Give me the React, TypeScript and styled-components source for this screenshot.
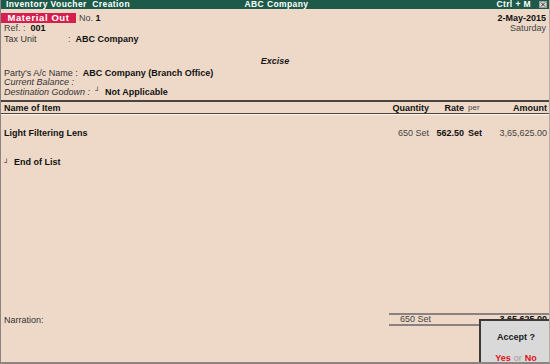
import * as React from 'react';
import styled, { createGlobalStyle } from 'styled-components';

const GlobalStyle = createGlobalStyle`
  html, body {
    margin: 0;
    padding: 0;
    background: #eed9c8;
  }
  body {
    font-family: "Liberation Sans", Arial, sans-serif;
    font-size: 9px;
    color: #1a1a1a;
  }
`;

const Screen = styled.div`
  position: relative;
  width: 550px;
  height: 364px;
  box-sizing: border-box;
  background: #eed9c8;
  display: flex;
  flex-direction: column;
  overflow: hidden;
  border-left: 1px solid #8c8480;
  border-right: 1px solid #b8aaa0;
  border-bottom: 2px solid #8c8480;
`;

const TitleBar = styled.div`
  height: 9px;
  background: #1d5a4a;
  color: #ffffff;
  font-weight: bold;
  font-size: 8.5px;
  letter-spacing: 0.4px;
  display: grid;
  grid-template-columns: 1fr auto 1fr;
  align-items: center;
  padding: 0 2px 0 5px;
  line-height: 9px;
`;

const TitleRight = styled.div`
  display: flex;
  justify-content: flex-end;
  align-items: center;
  gap: 8px;
`;

const CloseBox = styled.span`
  width: 8px;
  height: 7px;
  background: #d8d8d8;
  border: 1px solid #9a9a9a;
  box-sizing: border-box;
  display: flex;
  align-items: center;
  justify-content: center;
`;

const Head = styled.div`
  display: flex;
  justify-content: space-between;
  padding: 4px 3px 0 0;
`;

const Col = styled.div<{ $align?: string }>`
  display: flex;
  flex-direction: column;
  align-items: ${p => p.$align || 'flex-start'};
`;

const Line = styled.div<{ $h?: number; $italic?: boolean }>`
  height: ${p => p.$h || 10}px;
  line-height: ${p => p.$h || 10}px;
  display: flex;
  align-items: center;
  white-space: nowrap;
  font-style: ${p => (p.$italic ? 'italic' : 'normal')};
  padding-left: 3px;
`;

const TypeBadge = styled.span`
  width: 75px;
  height: 10px;
  margin-left: -3px;
  background: #d4204e;
  color: #fff;
  font-weight: bold;
  font-size: 9.5px;
  letter-spacing: 0.6px;
  display: inline-flex;
  justify-content: center;
  align-items: center;
  margin-right: 3px;
`;

const Label = styled.span<{ $w?: number }>`
  display: inline-block;
  width: ${p => (p.$w ? `${p.$w}px` : 'auto')};
  color: #333;
`;

const Bold = styled.span`
  font-weight: bold;
  font-style: normal;
  color: #111;
`;

const Muted = styled.span`
  color: #444;
`;

const SectionTitle = styled.div`
  text-align: center;
  font-weight: bold;
  font-style: italic;
  height: 10px;
  line-height: 10px;
  margin-top: 11px;
  margin-bottom: 2px;
`;

const Party = styled.div`
  display: flex;
  flex-direction: column;
`;

const Mark = styled.span<{ $gap?: number }>`
  font-size: 7px;
  font-weight: bold;
  font-style: normal;
  margin: -3px 5px 0 ${p => p.$gap ?? 2}px;
`;

const TableHead = styled.div`
  margin-top: 3px;
  border-top: 2px solid #4a4542;
  border-bottom: 1px solid #4a4542;
  height: 11px;
  display: grid;
  grid-template-columns: 1fr 60px 35px 20px 63px;
  align-items: center;
  padding-right: 2px;
  position: relative;
  &::after {
    content: '';
    position: absolute;
    left: 0;
    right: 0;
    bottom: -2px;
    border-bottom: 1px solid #fff5ec;
  }
`;

const Cell = styled.span<{ $right?: boolean; $bold?: boolean; $pad?: number; $small?: boolean; $muted?: boolean }>`
  text-align: ${p => (p.$right ? 'right' : 'left')};
  font-weight: ${p => (p.$bold ? 'bold' : 'normal')};
  padding-left: ${p => p.$pad || 0}px;
  font-size: ${p => (p.$small ? '8px' : '9px')};
  color: ${p => (p.$muted ? '#444' : '#111')};
  white-space: nowrap;
`;

const ItemRow = styled.div<{ $top: number }>`
  margin-top: ${p => p.$top}px;
  height: 10px;
  line-height: 10px;
  display: grid;
  grid-template-columns: 1fr 60px 35px 20px 63px;
  align-items: center;
  padding-right: 2px;
  padding-left: 3px;
`;

const Spacer = styled.div`
  flex: 1;
`;

const Footer = styled.div`
  display: flex;
  align-items: center;
  height: 13px;
  margin-bottom: 36px;
`;

const Narration = styled.span`
  padding-left: 3px;
  color: #333;
  flex: 1;
`;

const Totals = styled.div`
  width: 158px;
  height: 9px;
  border-top: 2px solid #8a8280;
  border-bottom: 2px solid #8a8280;
  display: grid;
  grid-template-columns: 42px 1fr;
  align-items: center;
  line-height: 9px;
  padding-right: 2px;
`;

const Dialog = styled.div`
  position: absolute;
  left: 478px;
  top: 319px;
  width: 72px;
  height: 46px;
  box-sizing: border-box;
  background: #d9d9d9;
  border: 2px solid #3a3a3a;
  border-right: none;
  border-bottom: none;
  display: flex;
  flex-direction: column;
  align-items: center;
`;

const Question = styled.div`
  margin-top: 11px;
  font-weight: bold;
`;

const Choices = styled.div`
  margin-top: 11px;
  font-weight: bold;
  color: #e0101a;
  display: flex;
  gap: 3px;
`;

const Or = styled.span`
  color: #a0a0a0;
  font-weight: normal;
`;

export default function App() {
  return (
    <>
      <GlobalStyle />
      <Screen>
        <TitleBar>
          <span>Inventory Voucher&nbsp; Creation</span>
          <span>ABC Company</span>
          <TitleRight>
            <span>Ctrl + M</span>
            <CloseBox>
              <svg width="6" height="5" viewBox="0 0 6 5">
                <path d="M1 0.5 L5 4.5 M5 0.5 L1 4.5" stroke="#333" strokeWidth="1" />
              </svg>
            </CloseBox>
          </TitleRight>
        </TitleBar>

        <Head>
          <Col>
            <Line $h={10}>
              <TypeBadge>Material Out</TypeBadge>
              <Muted>No.&nbsp;</Muted>
              <Bold>1</Bold>
            </Line>
            <Line $h={10}>
              <Muted>Ref. :&nbsp;&nbsp;</Muted>
              <Bold>001</Bold>
            </Line>
            <Line $h={12}>
              <Label $w={64}>Tax Unit</Label>
              <Muted>:&nbsp;&nbsp;</Muted>
              <Bold>ABC Company</Bold>
            </Line>
          </Col>
          <Col $align="flex-end">
            <Line $h={10}><Bold>2-May-2015</Bold></Line>
            <Line $h={10}><Muted>Saturday</Muted></Line>
          </Col>
        </Head>

        <SectionTitle>Excise</SectionTitle>

        <Party>
          <Line $h={10}>
            <Label>Party's A/c Name :&nbsp;&nbsp;</Label>
            <Bold>ABC Company (Branch Office)</Bold>
          </Line>
          <Line $h={9} $italic>
            <Label>Current Balance :</Label>
          </Line>
          <Line $h={10} $italic>
            <Label>Destination Godown :</Label>
            <Mark $gap={5}>┘</Mark>
            <Bold>Not Applicable</Bold>
          </Line>
        </Party>

        <TableHead>
          <Cell $pad={3} $bold>Name of Item</Cell>
          <Cell $right $bold>Quantity</Cell>
          <Cell $right $bold>Rate</Cell>
          <Cell $pad={4} $small $muted>per</Cell>
          <Cell $right $bold>Amount</Cell>
        </TableHead>

        <ItemRow $top={14}>
          <Cell $bold>Light Filtering Lens</Cell>
          <Cell $right $muted>650 Set</Cell>
          <Cell $right $bold>562.50</Cell>
          <Cell $bold $pad={4}>Set</Cell>
          <Cell $right $muted>3,65,625.00</Cell>
        </ItemRow>

        <ItemRow $top={19}>
          <Cell $bold>
            <Mark $gap={0}>┘</Mark>End of List
          </Cell>
        </ItemRow>

        <Spacer />

        <Footer>
          <Narration>Narration:</Narration>
          <Totals>
            <Cell $right $muted>650 Set</Cell>
            <Cell $right $bold>3,65,625.00</Cell>
          </Totals>
        </Footer>

        <Dialog>
          <Question>Accept ?</Question>
          <Choices>
            <span>Yes</span>
            <Or>or</Or>
            <span>No</span>
          </Choices>
        </Dialog>
      </Screen>
    </>
  );
}
